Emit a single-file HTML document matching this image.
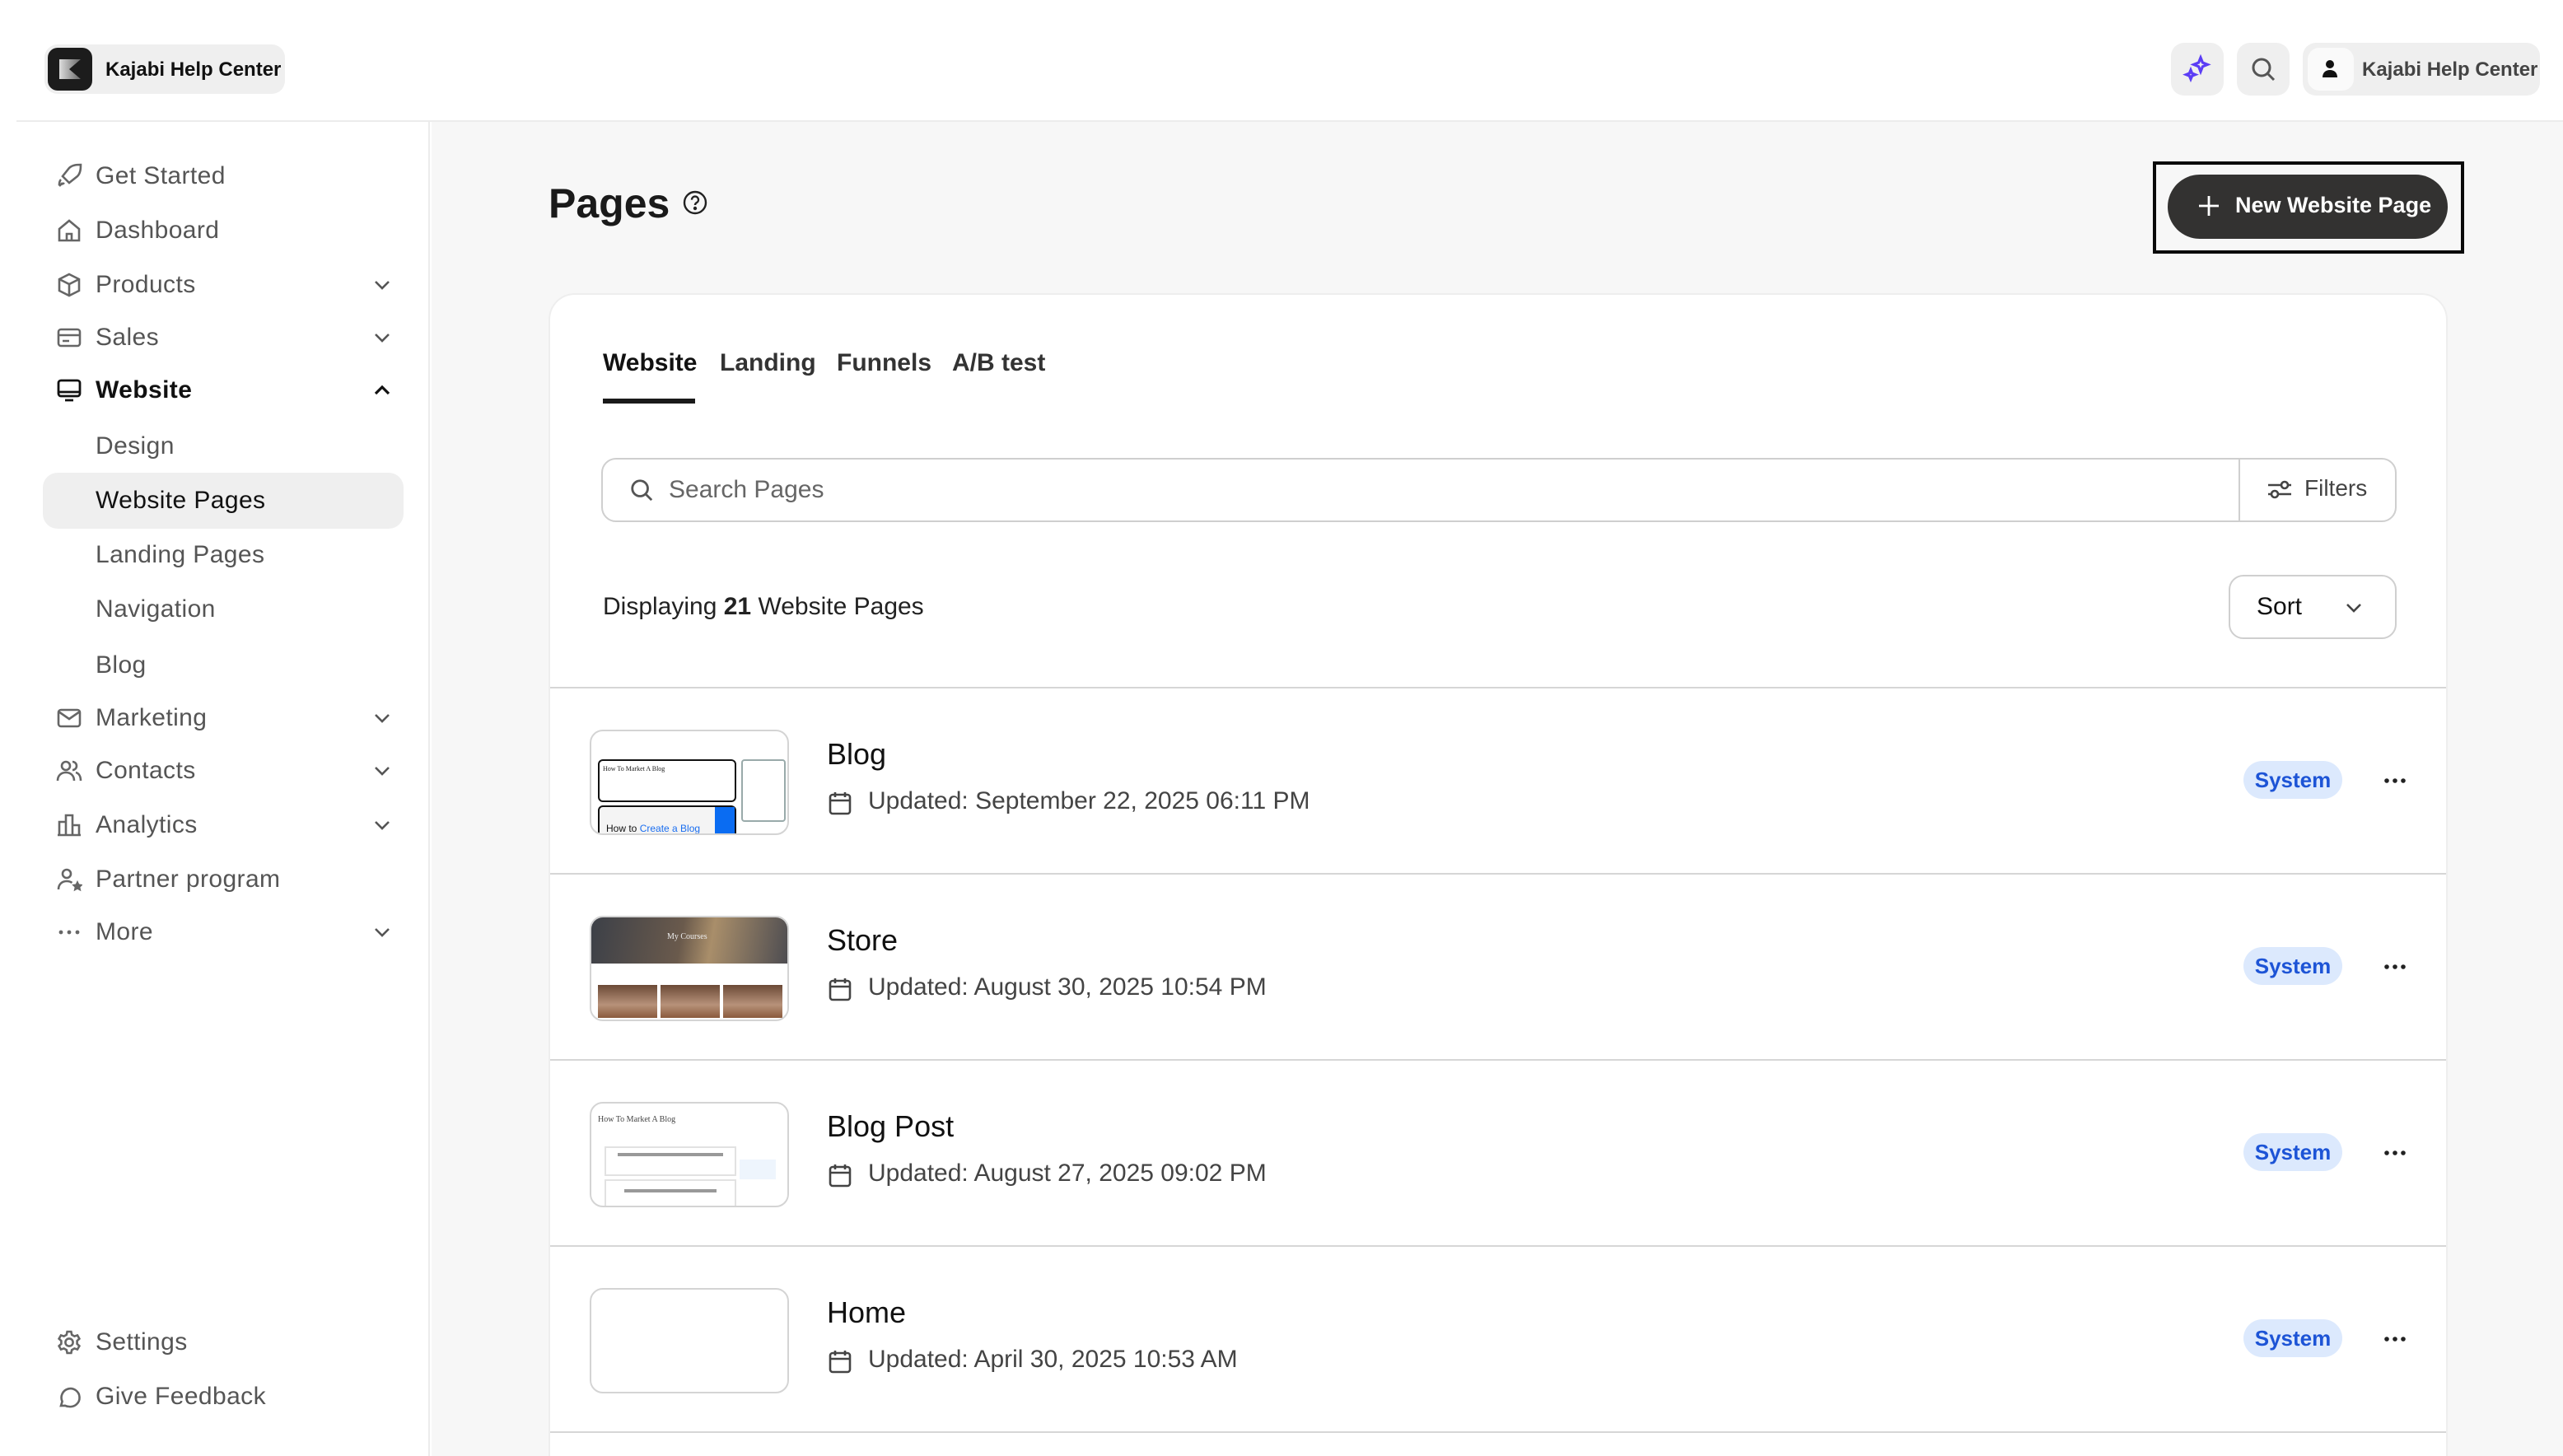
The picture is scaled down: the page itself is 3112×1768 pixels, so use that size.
<!DOCTYPE html>
<html><head><meta charset="utf-8">
<style>
*{box-sizing:border-box;margin:0;padding:0}
html,body{width:3112px;height:1768px;overflow:hidden;background:#fff}
#s{width:1556px;height:884px;transform:scale(2);transform-origin:0 0;position:relative;overflow:hidden;font-family:"Liberation Sans",sans-serif;color:#1a1a1a;background:#fff}
.a{position:absolute}
.hdr{left:10px;top:73px;width:1546px;height:1px;background:#ececec}
.side{left:0;top:74px;width:261px;height:810px;border-right:1px solid #ececec;background:#fff}
.main{left:262px;top:74px;width:1294px;height:810px;background:#f7f7f7}
.nav{position:absolute;left:58px;font-size:15px;color:#555;letter-spacing:.2px;transform:translateY(-50%)}
.ico{position:absolute;left:34px;width:16px;height:16px;transform:translateY(-50%)}
.chev{position:absolute;left:226px;width:12px;height:12px;transform:translateY(-50%)}
.card{left:333px;top:178px;width:1153px;height:706px;background:#fff;border-radius:16px 16px 0 0;border:1px solid #eee;border-bottom:none;overflow:hidden}
.row{position:absolute;left:0;width:1153px;height:113px;border-top:1px solid #d6d6d6}
.th{position:absolute;left:24px;top:25px;width:121px;height:64px;border:1px solid #d4d4d4;border-radius:8px;overflow:hidden;background:#fff}
.tt{position:absolute;left:168px;top:30px;font-size:18px;color:#111;font-weight:500}
.up{position:absolute;left:193px;top:60px;font-size:15px;color:#444}
.cal{position:absolute;left:169px;top:62px}
.bd{position:absolute;left:1028px;top:44px;width:60px;height:23px;border-radius:12px;background:#dce9fd;color:#1d54d6;font-size:13px;font-weight:600;text-align:center;line-height:23px}
.dots{position:absolute;left:1113px;top:54px}
</style></head><body><div id="s">
<div class="a" style="left:27px;top:27px;width:146px;height:30px;background:#efefef;border-radius:8px"></div>
<div class="a" style="left:29px;top:29px;width:27px;height:26px;background:#1c1c1c;border-radius:6px"></div>
<svg class="a" style="left:35px;top:35px" width="15" height="14" viewBox="0 0 15 14"><defs><linearGradient id="g" x1="0" x2="1"><stop offset="0" stop-color="#ddd"/><stop offset="1" stop-color="#666"/></linearGradient></defs><path d="M1 1h13L7 7l7 6H1z" fill="url(#g)"/></svg>
<div class="a" style="left:64px;top:35px;font-size:12px;font-weight:700;color:#111">Kajabi Help Center</div>
<div class="a" style="left:1318px;top:26px;width:32px;height:32px;background:#efefef;border-radius:8px"></div>
<svg class="a" style="left:1325px;top:33px" width="18" height="18" viewBox="0 0 18 18" fill="none" stroke="#5b3df5" stroke-width="1.6"><path d="M11 2l1.2 3 3 1.2-3 1.2L11 10.5 9.8 7.4 6.8 6.2l3-1.2z"/><path d="M5 9.5l.8 2 2 .8-2 .8L5 15l-.8-1.9-2-.8 2-.8z"/></svg>
<div class="a" style="left:1358px;top:26px;width:32px;height:32px;background:#efefef;border-radius:8px"></div>
<svg class="a" style="left:1366px;top:34px" width="16" height="16" viewBox="0 0 16 16" fill="none" stroke="#555" stroke-width="1.5"><circle cx="7" cy="7" r="5"/><path d="M11 11l3.5 3.5"/></svg>
<div class="a" style="left:1398px;top:26px;width:144px;height:32px;background:#efefef;border-radius:8px"></div>
<div class="a" style="left:1401px;top:29px;width:28px;height:26px;background:#fafafa;border-radius:7px"></div>
<svg class="a" style="left:1409px;top:36px" width="11" height="11" viewBox="0 0 11 11" fill="#111"><circle cx="5.5" cy="3" r="2.5"/><path d="M1 11c0-3 2-4.5 4.5-4.5S10 8 10 11z"/></svg>
<div class="a" style="left:1434px;top:35px;font-size:12px;font-weight:700;color:#444">Kajabi Help Center</div>
<div class="a hdr"></div>

<div class="a side"></div>
<div class="a main"></div>

<div class="a" style="left:26px;top:287px;width:219px;height:34px;background:#efefef;border-radius:9px"></div>
<svg class="ico" style="top:107px" viewBox="0 0 16 16" fill="none" stroke="#666" stroke-width="1.3"><path d="M6 10l-2-2 4-5c2-2 5-2 7-2 0 2 0 5-2 7l-5 4z"/><path d="M4 12l-2 2M3 10c-1 1-1 3-1 3s2 0 3-1"/></svg>
<div class="nav" style="top:107px">Get Started</div>
<svg class="ico" style="top:140px" viewBox="0 0 16 16" fill="none" stroke="#666" stroke-width="1.3"><path d="M2 7l6-5 6 5v7H2z"/><path d="M6.5 14v-4h3v4"/></svg>
<div class="nav" style="top:140px">Dashboard</div>
<svg class="ico" style="top:173px" viewBox="0 0 16 16" fill="none" stroke="#666" stroke-width="1.3"><path d="M8 1.5l6 3v7l-6 3-6-3v-7z M2 4.5l6 3 6-3M8 7.5v7"/></svg>
<div class="nav" style="top:173px">Products</div>
<svg class="ico" style="top:205px" viewBox="0 0 16 16" fill="none" stroke="#666" stroke-width="1.3"><rect x="1.5" y="3" width="13" height="10" rx="1.5"/><path d="M1.5 6.5h13M4 10h4"/></svg>
<div class="nav" style="top:205px">Sales</div>
<svg class="ico" style="top:237px" viewBox="0 0 16 16" fill="none" stroke="#111" stroke-width="1.4"><rect x="1.5" y="2" width="13" height="9.5" rx="1.5"/><path d="M1.5 9h13M5.5 14h5"/></svg>
<div class="nav" style="top:237px;color:#111;font-weight:700">Website</div>
<div class="nav" style="top:271px">Design</div>
<div class="nav" style="top:304px;color:#111;font-weight:500">Website Pages</div>
<div class="nav" style="top:337px">Landing Pages</div>
<div class="nav" style="top:370px">Navigation</div>
<div class="nav" style="top:404px">Blog</div>
<svg class="ico" style="top:436px" viewBox="0 0 16 16" fill="none" stroke="#666" stroke-width="1.3"><rect x="1.5" y="3" width="13" height="10" rx="1.5"/><path d="M1.5 4l6.5 4.5L14.5 4"/></svg>
<div class="nav" style="top:436px">Marketing</div>
<svg class="ico" style="top:468px" viewBox="0 0 16 16" fill="none" stroke="#666" stroke-width="1.3"><circle cx="6" cy="5" r="2.5"/><path d="M1 14c0-3 2-5 5-5s5 2 5 5M10 2.5a2.5 2.5 0 010 5M12 9c2 .5 3 2.5 3 5"/></svg>
<div class="nav" style="top:468px">Contacts</div>
<svg class="ico" style="top:501px" viewBox="0 0 16 16" fill="none" stroke="#666" stroke-width="1.3"><path d="M2 14V6h4v8M6 14V2h4v12M10 14V8h4v6zM1 14h14"/></svg>
<div class="nav" style="top:501px">Analytics</div>
<svg class="ico" style="top:534px" viewBox="0 0 16 16" fill="none" stroke="#666" stroke-width="1.3"><circle cx="6.5" cy="4.5" r="2.5"/><path d="M1.5 14c0-3 2-5 5-5 1.5 0 2.5.4 3.2 1"/><path d="M13 10l.6 1.3 1.4.2-1 1 .3 1.4-1.3-.7-1.3.7.3-1.4-1-1 1.4-.2z" fill="#666"/></svg>
<div class="nav" style="top:534px">Partner program</div>
<svg class="ico" style="top:566px" viewBox="0 0 16 16" fill="#666"><circle cx="3" cy="8" r="1.2"/><circle cx="8" cy="8" r="1.2"/><circle cx="13" cy="8" r="1.2"/></svg>
<div class="nav" style="top:566px">More</div>
<svg class="ico" style="top:815px" viewBox="0 0 16 16" fill="none" stroke="#666" stroke-width="1.3"><circle cx="8" cy="8" r="2.3"/><path d="M6.8 1.5h2.4l.4 1.9 1.6.9 1.8-.6 1.2 2.1-1.4 1.3v1.8l1.4 1.3-1.2 2.1-1.8-.6-1.6.9-.4 1.9H6.8l-.4-1.9-1.6-.9-1.8.6-1.2-2.1 1.4-1.3V7.1L1.8 5.8 3 3.7l1.8.6 1.6-.9z"/></svg>
<div class="nav" style="top:815px">Settings</div>
<svg class="ico" style="top:848px" viewBox="0 0 16 16" fill="none" stroke="#666" stroke-width="1.3"><path d="M3 13.5l.8-2.6A5.5 5.5 0 118 14a6 6 0 01-2.5-.6z"/></svg>
<div class="nav" style="top:848px">Give Feedback</div>
<svg class="chev" style="top:173px" viewBox="0 0 12 12" fill="none" stroke="#555" stroke-width="1.3"><path d="M2 4l4 4 4-4"/></svg>
<svg class="chev" style="top:205px" viewBox="0 0 12 12" fill="none" stroke="#555" stroke-width="1.3"><path d="M2 4l4 4 4-4"/></svg>
<svg class="chev" style="top:237px" viewBox="0 0 12 12" fill="none" stroke="#111" stroke-width="1.6"><path d="M2 8l4-4 4 4"/></svg>
<svg class="chev" style="top:436px" viewBox="0 0 12 12" fill="none" stroke="#555" stroke-width="1.3"><path d="M2 4l4 4 4-4"/></svg>
<svg class="chev" style="top:468px" viewBox="0 0 12 12" fill="none" stroke="#555" stroke-width="1.3"><path d="M2 4l4 4 4-4"/></svg>
<svg class="chev" style="top:501px" viewBox="0 0 12 12" fill="none" stroke="#555" stroke-width="1.3"><path d="M2 4l4 4 4-4"/></svg>
<svg class="chev" style="top:566px" viewBox="0 0 12 12" fill="none" stroke="#555" stroke-width="1.3"><path d="M2 4l4 4 4-4"/></svg>

<div class="a" style="left:333px;top:110px;font-size:25px;font-weight:700;color:#1a1a1a">Pages</div>
<svg class="a" style="left:414px;top:115px" width="16" height="16" viewBox="0 0 16 16" fill="none" stroke="#222" stroke-width="1.2"><circle cx="8" cy="8" r="6.5"/><path d="M6 6.3a2 2 0 113 1.7c-.7.4-1 .8-1 1.5"/><circle cx="8" cy="11.5" r=".5" fill="#222"/></svg>
<div class="a" style="left:1307px;top:98px;width:189px;height:56px;border:2.5px solid #0a0a0a"></div>
<div class="a" style="left:1316px;top:106px;width:170px;height:39px;background:#333231;border-radius:20px"></div>
<svg class="a" style="left:1334px;top:118px" width="14" height="14" viewBox="0 0 14 14" stroke="#fff" stroke-width="1.4"><path d="M7 1v12M1 7h12"/></svg>
<div class="a" style="left:1357px;top:117px;font-size:13.5px;font-weight:600;color:#fff">New Website Page</div>

<div class="a card">
 <div class="a" style="left:32px;top:33px;font-size:15px;font-weight:600;color:#111">Website</div>
 <div class="a" style="left:103px;top:33px;font-size:15px;font-weight:600;color:#333">Landing</div>
 <div class="a" style="left:174px;top:33px;font-size:15px;font-weight:600;color:#333">Funnels</div>
 <div class="a" style="left:244px;top:33px;font-size:15px;font-weight:600;color:#333">A/B test</div>
 <div class="a" style="left:32px;top:63px;width:56px;height:3px;background:#1a1a1a"></div>
 <div class="a" style="left:31px;top:99px;width:1090px;height:39px;border:1px solid #cfcfcf;border-radius:9px"></div>
 <div class="a" style="left:1025px;top:100px;width:1px;height:37px;background:#cfcfcf"></div>
 <svg class="a" style="left:48px;top:111px" width="15" height="15" viewBox="0 0 16 16" fill="none" stroke="#555" stroke-width="1.5"><circle cx="7" cy="7" r="5"/><path d="M11 11l3.5 3.5"/></svg>
 <div class="a" style="left:72px;top:110px;font-size:15px;color:#666">Search Pages</div>
 <svg class="a" style="left:1042px;top:111px" width="16" height="14" viewBox="0 0 16 14" fill="none" stroke="#444" stroke-width="1.3"><path d="M1 4.5h8M13 4.5h2M1 10h2M7 10h8"/><circle cx="11" cy="4.5" r="2"/><circle cx="5" cy="10" r="2"/></svg>
 <div class="a" style="left:1065px;top:109px;font-size:14px;font-weight:500;color:#444">Filters</div>
 <div class="a" style="left:32px;top:181px;font-size:15px;color:#222">Displaying <b>21</b> Website Pages</div>
 <div class="a" style="left:1019px;top:170px;width:102px;height:39px;border:1px solid #cfcfcf;border-radius:9px"></div>
 <div class="a" style="left:1036px;top:181px;font-size:15px;color:#111">Sort</div>
 <svg class="a" style="left:1089px;top:184px" width="12" height="12" viewBox="0 0 12 12" fill="none" stroke="#444" stroke-width="1.3"><path d="M2 4l4 4 4-4"/></svg>

 <div class="row" style="top:238px">
  <div class="th">
   <div class="a" style="left:4px;top:17px;width:84px;height:26px;border:1.5px solid #111;border-radius:3px"></div>
   <div class="a" style="left:7px;top:20px;font-size:4px;font-family:'Liberation Serif',serif">How To Market A Blog</div>
   <div class="a" style="left:4px;top:45px;width:84px;height:22px;border:1.5px solid #111;border-radius:3px;background:#f4f4f4"></div>
   <div class="a" style="left:75px;top:46px;width:12px;height:20px;background:#0a6cf2"></div>
   <div class="a" style="left:9px;top:57px;font-size:6px;color:#111">How to <span style="color:#1a6ef0">Create a Blog</span></div>
   <div class="a" style="left:91px;top:17px;width:27px;height:38px;border:1px solid #9aa;border-radius:2px"></div>
  </div>
  <div class="tt">Blog</div>
  <svg class="cal" width="14" height="15" viewBox="0 0 14 15" fill="none" stroke="#444" stroke-width="1.3"><rect x="1" y="2.5" width="12" height="11.5" rx="1.5"/><path d="M1 6h12M4 1v3M10 1v3"/></svg>
  <div class="up">Updated: September 22, 2025 06:11 PM</div>
  <div class="bd">System</div>
  <svg class="dots" width="14" height="4" viewBox="0 0 14 4" fill="#222"><circle cx="2" cy="2" r="1.4"/><circle cx="7" cy="2" r="1.4"/><circle cx="12" cy="2" r="1.4"/></svg>
 </div>
 <div class="row" style="top:351px">
  <div class="th">
   <div class="a" style="left:0;top:0;width:121px;height:28px;background:linear-gradient(100deg,#3c4048,#6a5a4c 45%,#a98e6a 60%,#4a4a50)"></div>
   <div class="a" style="left:46px;top:10px;font-size:5px;color:#eee;font-family:'Liberation Serif',serif">My Courses</div>
   <div class="a" style="left:4px;top:41px;width:36px;height:20px;background:linear-gradient(#6b4a36,#b7927a 60%,#8a5a3c)"></div>
   <div class="a" style="left:42px;top:41px;width:36px;height:20px;background:linear-gradient(#6b4a36,#b7927a 60%,#8a5a3c)"></div>
   <div class="a" style="left:80px;top:41px;width:36px;height:20px;background:linear-gradient(#6b4a36,#b7927a 60%,#8a5a3c)"></div>
  </div>
  <div class="tt">Store</div>
  <svg class="cal" width="14" height="15" viewBox="0 0 14 15" fill="none" stroke="#444" stroke-width="1.3"><rect x="1" y="2.5" width="12" height="11.5" rx="1.5"/><path d="M1 6h12M4 1v3M10 1v3"/></svg>
  <div class="up">Updated: August 30, 2025 10:54 PM</div>
  <div class="bd">System</div>
  <svg class="dots" width="14" height="4" viewBox="0 0 14 4" fill="#222"><circle cx="2" cy="2" r="1.4"/><circle cx="7" cy="2" r="1.4"/><circle cx="12" cy="2" r="1.4"/></svg>
 </div>
 <div class="row" style="top:464px">
  <div class="th">
   <div class="a" style="left:4px;top:8px;font-size:5px;font-family:'Liberation Serif',serif;color:#444">How To Market A Blog</div>
   <div class="a" style="left:8px;top:26px;width:80px;height:18px;border:1px solid #e2e2e2"></div>
   <div class="a" style="left:16px;top:30px;width:64px;height:2px;background:#999"></div>
   <div class="a" style="left:8px;top:46px;width:80px;height:20px;border:1px solid #e2e2e2"></div>
   <div class="a" style="left:20px;top:52px;width:56px;height:2px;background:#999"></div>
   <div class="a" style="left:90px;top:34px;width:22px;height:12px;background:#eef5fd"></div>
  </div>
  <div class="tt">Blog Post</div>
  <svg class="cal" width="14" height="15" viewBox="0 0 14 15" fill="none" stroke="#444" stroke-width="1.3"><rect x="1" y="2.5" width="12" height="11.5" rx="1.5"/><path d="M1 6h12M4 1v3M10 1v3"/></svg>
  <div class="up">Updated: August 27, 2025 09:02 PM</div>
  <div class="bd">System</div>
  <svg class="dots" width="14" height="4" viewBox="0 0 14 4" fill="#222"><circle cx="2" cy="2" r="1.4"/><circle cx="7" cy="2" r="1.4"/><circle cx="12" cy="2" r="1.4"/></svg>
 </div>
 <div class="row" style="top:577px">
  <div class="th"></div>
  <div class="tt">Home</div>
  <svg class="cal" width="14" height="15" viewBox="0 0 14 15" fill="none" stroke="#444" stroke-width="1.3"><rect x="1" y="2.5" width="12" height="11.5" rx="1.5"/><path d="M1 6h12M4 1v3M10 1v3"/></svg>
  <div class="up">Updated: April 30, 2025 10:53 AM</div>
  <div class="bd">System</div>
  <svg class="dots" width="14" height="4" viewBox="0 0 14 4" fill="#222"><circle cx="2" cy="2" r="1.4"/><circle cx="7" cy="2" r="1.4"/><circle cx="12" cy="2" r="1.4"/></svg>
 </div>
 <div class="row" style="top:690px;height:16px"></div>
</div>
</div></body></html>
